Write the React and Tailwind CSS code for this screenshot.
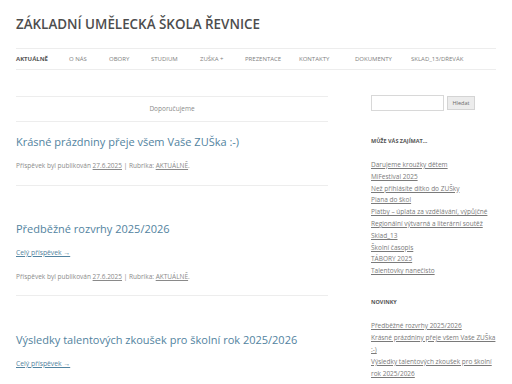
import React from "react";

const nav = [
   ["AKTUÁLNĚ", "w-[53px] font-bold text-[#555]"],
   ["O NÁS", "w-[40px]"],
   ["OBORY", "w-[42px]"],
   ["STUDIUM", "w-[49px]"],
   ["ZUŠKA +", "w-[45px]"],
   ["PREZENTACE", "w-[54px]"],
   ["KONTAKTY", "w-[56px]"],
   ["DOKUMENTY", "w-[56px]"],
   ["SKLAD_13/DŘEVÁK", ""],
];

const zajimat = [
   "Darujeme kroužky dětem",
   "MiFestival 2025",
   "Než přihlásíte dítko do ZUŠky",
   "Piana do škol",
   "Platby – úplata za vzdělávání, výpůjčné",
   "Regionální výtvarná a literární soutěž",
   "Sklad_13",
   "Školní časopis",
   "TÁBORY 2025",
   "Talentovky nanečisto",
];

const novinky = [
   "Předběžné rozvrhy 2025/2026",
   "Krásné prázdniny přeje všem Vaše ZUŠka :-)",
   "Výsledky talentových zkoušek pro školní rok 2025/2026",
];

const Meta = () => (
   <p className="text-[6.5px] leading-[12px] text-[#8a8a8a]">
      Příspěvek byl publikován <span className="underline">27.6.2025</span> | Rubrika: <span className="underline">AKTUÁLNĚ</span>.
   </p>
);

export default function App() {
   return (
      <div className="w-[512px] h-[384px] overflow-hidden bg-white pl-4 pr-4 font-['Open_Sans',sans-serif]">
         <h1 className="pt-[14px] h-[48px] text-[13.4px] leading-[20px] font-semibold text-[#4d4d4d]">
            ZÁKLADNÍ UMĚLECKÁ ŠKOLA ŘEVNICE
         </h1>
         <nav className="w-[480px] h-[22px] border-y border-[#ededed] flex items-center text-[6px] text-[#808080]">
            {nav.map(([n, c]) => (
               <span key={n} className={"whitespace-nowrap shrink-0 " + c}>{n}</span>
            ))}
         </nav>
         <div className="flex">
            <main className="w-[312px]">
               <div className="mt-[26px] h-[26px] border-y border-[#ededed] flex items-center justify-center text-[6.5px] text-[#8a8a8a]">
                  Doporučujeme
               </div>
               <article className="pt-[10px] pb-[13px] border-b border-[#ededed]">
                  <h2 className="text-[11px] leading-[20px] text-[#5283a0]">Krásné prázdniny přeje všem Vaše ZUŠka :-)</h2>
                  <div className="mt-[8px]"><Meta /></div>
               </article>
               <article className="pt-[33px] pb-[12px] border-b border-[#ededed]">
                  <h2 className="text-[11px] leading-[20px] text-[#5283a0]">Předběžné rozvrhy 2025/2026</h2>
                  <p className="mt-[8px] text-[6.8px] leading-[12px] text-[#5283a0] underline">Celý příspěvek →</p>
                  <div className="mt-[12px]"><Meta /></div>
               </article>
               <article className="pt-[34px]">
                  <h2 className="text-[11px] leading-[20px] text-[#5283a0]">Výsledky talentových zkoušek pro školní rok 2025/2026</h2>
                  <p className="mt-[8px] text-[6.8px] leading-[12px] text-[#5283a0] underline">Celý příspěvek →</p>
               </article>
            </main>
            <aside className="ml-[43px] w-[125px]">
               <div className="mt-[25px] flex items-center">
                  <div className="w-[73px] h-[16px] border border-[#d8d8d8] bg-white"></div>
                  <div className="ml-[3px] w-[28px] h-[14px] border border-[#d4d4d4] bg-[#ececec] flex items-center justify-center text-[5.5px] text-[#6a6a6a]">Hledat</div>
               </div>
               <h3 className="mt-[25px] text-[5.5px] leading-[10px] font-bold text-[#555]">MŮŽE VÁS ZAJÍMAT...</h3>
               <ul className="mt-[13px] text-[6.5px] leading-[11.8px] text-[#7a7a7a]">
                  {zajimat.map((z) => (
                     <li key={z} className="underline">{z}</li>
                  ))}
               </ul>
               <h3 className="mt-[20px] text-[5.5px] leading-[10px] font-bold text-[#555]">NOVINKY</h3>
               <ul className="mt-[13px] text-[6.5px] leading-[12px] text-[#7a7a7a]">
                  {novinky.map((z) => (
                     <li key={z} className="underline">{z}</li>
                  ))}
               </ul>
            </aside>
         </div>
      </div>
   );
}
